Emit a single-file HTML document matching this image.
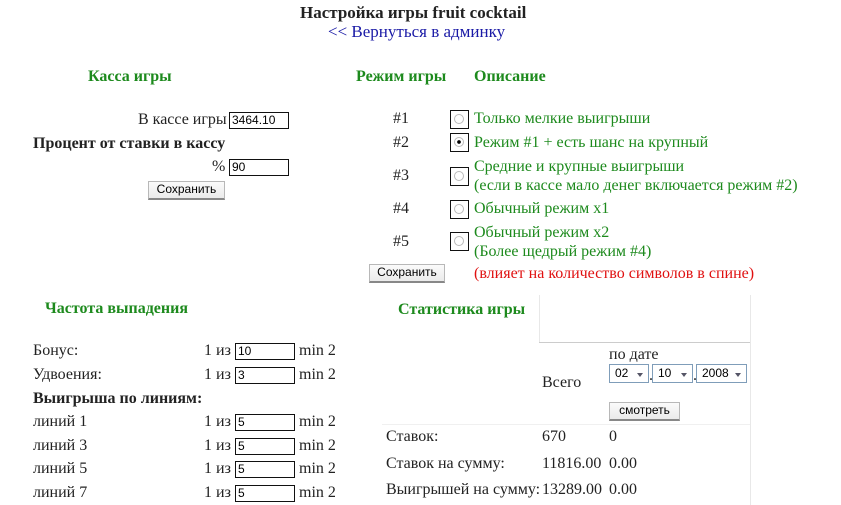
<!DOCTYPE html>
<html><head><meta charset="utf-8"><style>
body{margin:0;width:841px;height:505px;background:#fff;font-family:"Liberation Serif","DejaVu Serif",serif;font-size:16px;color:#222;position:relative;overflow:hidden}
.a{position:absolute;line-height:18px;white-space:nowrap}
.g{color:#1d8a1d}
.b{font-weight:bold}
.in{position:absolute;border:1px solid #111;background:#fff;font-family:"Liberation Sans",sans-serif;font-size:12px;line-height:15px;padding-left:2px;box-sizing:border-box;color:#000}
.btn{position:absolute;border:1px solid #b8b8b8;border-bottom:2px solid #888;background:linear-gradient(#fbfbfb,#ebebeb);font-family:"Liberation Sans",sans-serif;font-size:12px;text-align:center;box-sizing:border-box;line-height:15px;color:#000}
.rb{position:absolute;width:19px;height:19px;border:1px solid #111;box-sizing:border-box;background:#fff}
.rb i{position:absolute;left:3px;top:3px;width:10px;height:10px;border-radius:50%;border:1px solid #bbb;box-sizing:border-box}
.sel{position:absolute;height:19px;border:1px solid #7f9db9;box-sizing:border-box;font-family:"Liberation Sans",sans-serif;font-size:12px;line-height:17px;padding-left:5px;color:#000}
.sel:after{content:"";position:absolute;right:5px;top:8px;border:3.5px solid transparent;border-top:4px solid #556;}
.ln{position:absolute;background:#e8e8e8}
</style></head><body>
<div class="a b" style="left:300px;top:4px;font-size:17px;color:#222">Настройка игры fruit cocktail</div>
<div class="a" style="left:328px;top:23px;color:#1a1aa6;font-size:17px">&lt;&lt; Вернуться в админку</div>

<div class="a g b" style="left:88px;top:68px">Касса игры</div>
<div class="a g b" style="left:356px;top:68px">Режим игры</div>
<div class="a g b" style="left:474px;top:68px">Описание</div>

<div class="a" style="left:138px;top:111px">В кассе игры</div>
<div class="in" style="left:229px;top:112px;width:60px;height:17px">3464.10</div>
<div class="a b" style="left:33px;top:135px">Процент от ставки в кассу</div>
<div class="a" style="left:212px;top:158px">%</div>
<div class="in" style="left:229px;top:159px;width:60px;height:17px">90</div>
<div class="btn" style="left:148px;top:181px;width:77px;height:19px">Сохранить</div>

<div class="a" style="left:393px;top:110px">#1</div>
<div class="a" style="left:393px;top:134px">#2</div>
<div class="a" style="left:393px;top:167px">#3</div>
<div class="a" style="left:393px;top:200px">#4</div>
<div class="a" style="left:393px;top:233px">#5</div>
<div class="rb" style="left:450px;top:110px"><i></i></div>
<div class="rb" style="left:450px;top:133px"><i style="background:radial-gradient(#000 30%,transparent 35%)"></i></div>
<div class="rb" style="left:450px;top:167px"><i></i></div>
<div class="rb" style="left:450px;top:200px"><i></i></div>
<div class="rb" style="left:450px;top:232px"><i></i></div>
<div class="a g" style="left:474px;top:110px">Только мелкие выигрыши</div>
<div class="a g" style="left:474px;top:134px">Режим #1 + есть шанс на крупный</div>
<div class="a g" style="left:474px;top:158px">Средние и крупные выигрыши</div>
<div class="a g" style="left:474px;top:177px">(если в кассе мало денег включается режим #2)</div>
<div class="a g" style="left:474px;top:200px">Обычный режим x1</div>
<div class="a g" style="left:474px;top:224px">Обычный режим x2</div>
<div class="a g" style="left:474px;top:243px">(Более щедрый режим #4)</div>
<div class="btn" style="left:369px;top:264px;width:76px;height:19px">Сохранить</div>
<div class="a" style="left:474px;top:265px;color:#e01010">(влияет на количество символов в спине)</div>

<div class="a g b" style="left:45px;top:300px">Частота выпадения</div>
<div class="a" style="left:33px;top:342px">Бонус:</div>
<div class="a" style="left:33px;top:366px">Удвоения:</div>
<div class="a b" style="left:33px;top:390px">Выигрыша по линиям:</div>
<div class="a" style="left:33px;top:413px">линий 1</div>
<div class="a" style="left:33px;top:437px">линий 3</div>
<div class="a" style="left:33px;top:460px">линий 5</div>
<div class="a" style="left:33px;top:484px">линий 7</div>
<div class="a" style="left:204px;top:342px">1 из</div><div class="in" style="left:235px;top:343px;width:60px;height:17px">10</div><div class="a" style="left:299px;top:342px">min 2</div>
<div class="a" style="left:204px;top:366px">1 из</div><div class="in" style="left:235px;top:367px;width:60px;height:17px">3</div><div class="a" style="left:299px;top:366px">min 2</div>
<div class="a" style="left:204px;top:413px">1 из</div><div class="in" style="left:235px;top:414px;width:60px;height:17px">5</div><div class="a" style="left:299px;top:413px">min 2</div>
<div class="a" style="left:204px;top:437px">1 из</div><div class="in" style="left:235px;top:438px;width:60px;height:17px">5</div><div class="a" style="left:299px;top:437px">min 2</div>
<div class="a" style="left:204px;top:460px">1 из</div><div class="in" style="left:235px;top:461px;width:60px;height:17px">5</div><div class="a" style="left:299px;top:460px">min 2</div>
<div class="a" style="left:204px;top:484px">1 из</div><div class="in" style="left:235px;top:485px;width:60px;height:17px">5</div><div class="a" style="left:299px;top:484px">min 2</div>

<div class="ln" style="left:539px;top:295px;width:1px;height:48px"></div>
<div class="ln" style="left:539px;top:342px;width:212px;height:1px;background:#ccc"></div>
<div class="ln" style="left:750px;top:295px;width:1px;height:210px"></div>
<div class="ln" style="left:382px;top:424px;width:368px;height:1px;background:#f0f0f0"></div>
<div class="a g b" style="left:398px;top:301px">Статистика игры</div>
<div class="a" style="left:609px;top:346px">по дате</div>
<div class="sel" style="left:609px;top:364px;width:40px">02</div>
<div class="a" style="left:649px;top:367px">.</div>
<div class="sel" style="left:652px;top:364px;width:41px">10</div>
<div class="a" style="left:693px;top:367px">.</div>
<div class="sel" style="left:696px;top:364px;width:51px">2008</div>
<div class="a" style="left:542px;top:374px">Всего</div>
<div class="btn" style="left:609px;top:402px;width:71px;height:19px">смотреть</div>
<div class="a" style="left:386px;top:428px">Ставок:</div>
<div class="a" style="left:542px;top:428px">670</div>
<div class="a" style="left:609px;top:428px">0</div>
<div class="a" style="left:386px;top:455px">Ставок на сумму:</div>
<div class="a" style="left:542px;top:455px">11816.00</div>
<div class="a" style="left:609px;top:455px">0.00</div>
<div class="a" style="left:386px;top:481px">Выигрышей на сумму:</div>
<div class="a" style="left:542px;top:481px">13289.00</div>
<div class="a" style="left:609px;top:481px">0.00</div>
</body></html>
